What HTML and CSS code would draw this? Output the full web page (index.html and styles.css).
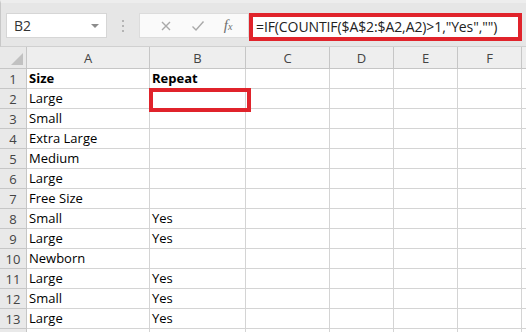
FILE: index.html
```html
<!DOCTYPE html>
<html lang="en">
<head>
  <meta charset="UTF-8" />
  <title>Find repeats</title>
  <link rel="stylesheet" href="styles.css">
</head>
<body>
  <div class="toolbar">
    <div class="name-box">
      <span>B2</span>
      <span class="caret"></span>
    </div>
    <div class="grip"><i></i><i></i><i></i></div>
    <div class="fx-buttons">
      <svg class="icon" width="12" height="12" viewBox="0 0 12 12">
        <path d="M2 2 L10 10 M10 2 L2 10" stroke="#a9a9a9" stroke-width="1.4" fill="none"/>
      </svg>
      <svg class="icon" width="14" height="12" viewBox="0 0 14 12">
        <path d="M1.5 6.5 L5 10 L12.5 1.5" stroke="#a9a9a9" stroke-width="1.4" fill="none"/>
      </svg>
      <span class="fx">f<sub>x</sub></span>
    </div>
    <div class="formula">=IF(COUNTIF($A$2:$A2,A2)&gt;1,"Yes","")</div>
  </div>

  <div class="sheet">
    <div class="corner"><span class="tri"></span></div>
    <div class="col-head">A</div>
    <div class="col-head">B</div>
    <div class="col-head">C</div>
    <div class="col-head">D</div>
    <div class="col-head">E</div>
    <div class="col-head">F</div>
    <div class="col-head last"></div>

    <div class="row-head">1</div><div class="cell bold">Size</div><div class="cell bold">Repeat</div><div class="cell"></div><div class="cell"></div><div class="cell"></div><div class="cell"></div><div class="cell last"></div>
    <div class="row-head">2</div><div class="cell">Large</div><div class="cell active"><span class="mark"></span></div><div class="cell"></div><div class="cell"></div><div class="cell"></div><div class="cell"></div><div class="cell last"></div>
    <div class="row-head">3</div><div class="cell">Small</div><div class="cell"></div><div class="cell"></div><div class="cell"></div><div class="cell"></div><div class="cell"></div><div class="cell last"></div>
    <div class="row-head">4</div><div class="cell">Extra Large</div><div class="cell"></div><div class="cell"></div><div class="cell"></div><div class="cell"></div><div class="cell"></div><div class="cell last"></div>
    <div class="row-head">5</div><div class="cell">Medium</div><div class="cell"></div><div class="cell"></div><div class="cell"></div><div class="cell"></div><div class="cell"></div><div class="cell last"></div>
    <div class="row-head">6</div><div class="cell">Large</div><div class="cell"></div><div class="cell"></div><div class="cell"></div><div class="cell"></div><div class="cell"></div><div class="cell last"></div>
    <div class="row-head">7</div><div class="cell">Free Size</div><div class="cell"></div><div class="cell"></div><div class="cell"></div><div class="cell"></div><div class="cell"></div><div class="cell last"></div>
    <div class="row-head">8</div><div class="cell">Small</div><div class="cell">Yes</div><div class="cell"></div><div class="cell"></div><div class="cell"></div><div class="cell"></div><div class="cell last"></div>
    <div class="row-head">9</div><div class="cell">Large</div><div class="cell">Yes</div><div class="cell"></div><div class="cell"></div><div class="cell"></div><div class="cell"></div><div class="cell last"></div>
    <div class="row-head">10</div><div class="cell">Newborn</div><div class="cell"></div><div class="cell"></div><div class="cell"></div><div class="cell"></div><div class="cell"></div><div class="cell last"></div>
    <div class="row-head">11</div><div class="cell">Large</div><div class="cell">Yes</div><div class="cell"></div><div class="cell"></div><div class="cell"></div><div class="cell"></div><div class="cell last"></div>
    <div class="row-head">12</div><div class="cell">Small</div><div class="cell">Yes</div><div class="cell"></div><div class="cell"></div><div class="cell"></div><div class="cell"></div><div class="cell last"></div>
    <div class="row-head">13</div><div class="cell">Large</div><div class="cell">Yes</div><div class="cell"></div><div class="cell"></div><div class="cell"></div><div class="cell"></div><div class="cell last"></div>
    <div class="row-head"></div><div class="cell"></div><div class="cell"></div><div class="cell"></div><div class="cell"></div><div class="cell"></div><div class="cell"></div><div class="cell last"></div>
  </div>
</body>
</html>
```

FILE: styles.css
```css
* {
  margin: 0;
  padding: 0;
  box-sizing: border-box;
  font-family: 'Open Sans', sans-serif;
}

body {
  width: 526px;
  height: 332px;
  overflow: hidden;
  background: #fff;
  color: #000;
}

.toolbar {
  height: 47px;
  display: flex;
  align-items: flex-start;
  padding: 10px 0 0 5px;
  background: #e6e6e6;
  border-top: 3px solid #ededed;
  border-left: 1px solid #c8c8c8;
  border-bottom: 1px solid #d0d0d0;
}

.name-box {
  width: 101px;
  height: 25px;
  background: #fff;
  border: 1px solid #d6d6d6;
  display: flex;
  align-items: center;
  justify-content: space-between;
  padding: 0 7px 0 7px;
  font-size: 14px;
  color: #333;
}

.caret {
  width: 0;
  height: 0;
  border-left: 4px solid transparent;
  border-right: 4px solid transparent;
  border-top: 4px solid #8c8c8c;
}

.grip {
  width: 32px;
  height: 25px;
  display: flex;
  flex-direction: column;
  align-items: center;
  justify-content: center;
  gap: 3px;
}

.grip i {
  width: 2px;
  height: 2px;
  background: #b4b4b4;
}

.fx-buttons {
  width: 110px;
  height: 25px;
  background: #fafafa;
  border: 1px solid #dcdcdc;
  display: flex;
  align-items: center;
  justify-content: space-around;
  padding: 0 6px 0 10px;
}

.fx {
  font-family: 'Liberation Serif', serif;
  font-style: italic;
  font-size: 15px;
  color: #6e6e6e;
}

.fx sub {
  font-family: 'Liberation Serif', serif;
  font-size: 10px;
  vertical-align: 0;
}

.formula {
  width: 273px;
  height: 28px;
  border: 4px solid #e0232b;
  background: #fff;
  font-size: 14px;
  line-height: 20px;
  letter-spacing: -0.1px;
  padding-left: 3px;
  color: #222;
  white-space: nowrap;
}

.sheet {
  display: grid;
  grid-template-columns: 27px 123px 96px 84px 64px 64px 64px 4px;
  grid-template-rows: 22px repeat(13, 20px) 4px;
}

.corner,
.col-head,
.row-head {
  background: #e9e9e9;
  color: #444;
  font-size: 13px;
  border-right: 1px solid #c6c6c6;
  border-bottom: 1px solid #c6c6c6;
}

.corner {
  position: relative;
}

.tri {
  position: absolute;
  right: 3px;
  bottom: 3px;
  width: 0;
  height: 0;
  border-left: 12px solid transparent;
  border-bottom: 12px solid #c1c1c1;
}

.col-head {
  display: flex;
  align-items: center;
  justify-content: center;
  background: #eeeeee;
}

.row-head {
  display: flex;
  align-items: center;
  justify-content: center;
  font-size: 13px;
}

.cell {
  border-right: 1px solid #d4d4d4;
  border-bottom: 1px solid #d4d4d4;
  font-size: 13px;
  line-height: 19px;
  padding-left: 2px;
  white-space: nowrap;
}

.last {
  border-right: none;
}

.bold {
  font-weight: 700;
}

.active {
  position: relative;
}

.mark {
  position: absolute;
  left: -1px;
  top: -1px;
  width: 102px;
  height: 24px;
  border: 4px solid #e0232b;
}
```
